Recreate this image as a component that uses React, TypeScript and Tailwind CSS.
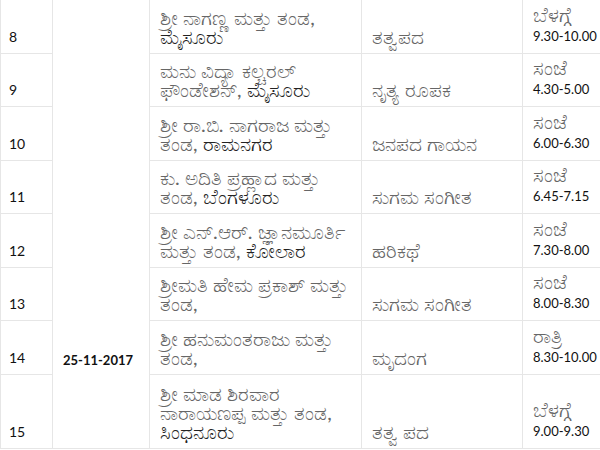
type Seg = { t: string; dark?: boolean };

const rows: { n: string; lines: Seg[][]; art: string; when: string; time: string }[] = [
  { n: "8", lines: [[{ t: "ಶ್ರೀ ನಾಗಣ್ಣ ಮತ್ತು ತಂಡ," }], [{ t: "ಮೈಸೂರು", dark: true }]], art: "ತತ್ವಪದ", when: "ಬೆಳಗ್ಗೆ", time: "9.30-10.00" },
  { n: "9", lines: [[{ t: "ಮನು ವಿದ್ಯಾ ಕಲ್ಚರಲ್" }], [{ t: "ಫೌಂಡೇಶನ್, " }, { t: "ಮೈಸೂರು", dark: true }]], art: "ನೃತ್ಯ ರೂಪಕ", when: "ಸಂಜೆ", time: "4.30-5.00" },
  { n: "10", lines: [[{ t: "ಶ್ರೀ ರಾ.ಬಿ. ನಾಗರಾಜ ಮತ್ತು" }], [{ t: "ತಂಡ, " }, { t: "ರಾಮನಗರ", dark: true }]], art: "ಜನಪದ ಗಾಯನ", when: "ಸಂಜೆ", time: "6.00-6.30" },
  { n: "11", lines: [[{ t: "ಕು. ಅದಿತಿ ಪ್ರಹ್ಲಾದ ಮತ್ತು" }], [{ t: "ತಂಡ, " }, { t: "ಬೆಂಗಳೂರು", dark: true }]], art: "ಸುಗಮ ಸಂಗೀತ", when: "ಸಂಜೆ", time: "6.45-7.15" },
  { n: "12", lines: [[{ t: "ಶ್ರೀ ಎನ್.ಆರ್. ಜ್ಞಾನಮೂರ್ತಿ" }], [{ t: "ಮತ್ತು ತಂಡ, " }, { t: "ಕೋಲಾರ", dark: true }]], art: "ಹರಿಕಥೆ", when: "ಸಂಜೆ", time: "7.30-8.00" },
  { n: "13", lines: [[{ t: "ಶ್ರೀಮತಿ ಹೇಮ ಪ್ರಕಾಶ್ ಮತ್ತು" }], [{ t: "ತಂಡ," }]], art: "ಸುಗಮ ಸಂಗೀತ", when: "ಸಂಜೆ", time: "8.00-8.30" },
  { n: "14", lines: [[{ t: "ಶ್ರೀ ಹನುಮಂತರಾಜು ಮತ್ತು" }], [{ t: "ತಂಡ," }]], art: "ಮೃದಂಗ", when: "ರಾತ್ರಿ", time: "8.30-10.00" },
  {
    n: "15",
    lines: [[{ t: "ಶ್ರೀ ಮಾಡ ಶಿರವಾರ" }], [{ t: "ನಾರಾಯಣಪ್ಪ ಮತ್ತು ತಂಡ," }], [{ t: "ಸಿಂಧನೂರು", dark: true }]],
    art: "ತತ್ವ ಪದ",
    when: "ಬೆಳಗ್ಗೆ",
    time: "9.00-9.30",
  },
];

const cell = "border border-[#e6e6e6] align-bottom pb-[7px] px-[10px]";

export default function App() {
  return (
    <div className="w-[600px] h-[450px] overflow-hidden bg-white font-['Lato','Noto_Sans',sans-serif] text-[20px] leading-[19px]">
      <table className="table-fixed border-collapse w-[640px] -mt-px">
        <colgroup>
          <col className="w-[52px]" />
          <col className="w-[97px]" />
          <col className="w-[212px]" />
          <col className="w-[161px]" />
          <col className="w-[118px]" />
        </colgroup>
        <tbody>
          {rows.map((r, i) => (
            <tr key={r.n} className={i === 7 ? "h-[74px]" : "h-[53.5px]"}>
              <td className={`${cell} text-[#111] text-[14px] !pl-[8px]`}>{r.n}</td>
              {i === 0 && (
                <td rowSpan={8} className="border border-[#e6e6e6] align-top pl-[10px] pt-[351px] text-[13px] leading-[19px] font-bold text-[#111]">
                  25-11-2017
                </td>
              )}
              <td className={`${cell} text-[#666] whitespace-nowrap`}>
                {r.lines.map((l, j) => (
                  <div key={j}>
                    {l.map((s, k) => (
                      <span key={k} className={s.dark ? "text-[#222]" : ""}>
                        {s.t}
                      </span>
                    ))}
                  </div>
                ))}
              </td>
              <td className={`${cell} text-[#666]`}>{r.art}</td>
              <td className={`${cell}`}>
                <div className="text-[#666]">{r.when}</div>
                <div className="mt-[3px] text-[#111] text-[13px]">{r.time}</div>
              </td>
            </tr>
          ))}
        </tbody>
      </table>
    </div>
  );
}
